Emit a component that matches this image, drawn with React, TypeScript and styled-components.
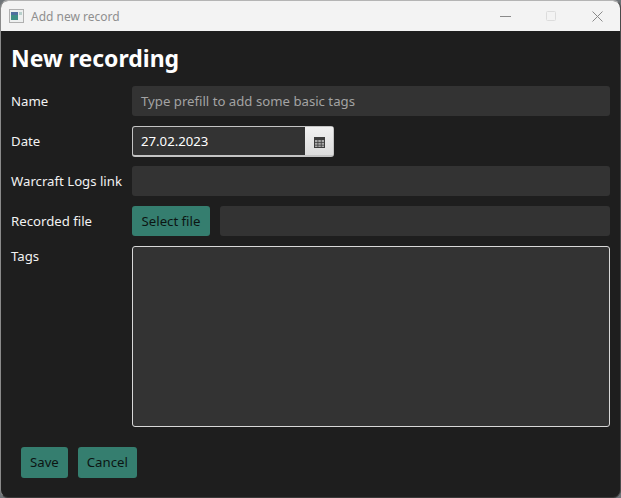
import styled, { createGlobalStyle } from 'styled-components';

const GlobalStyle = createGlobalStyle`
  html, body {
    margin: 0;
    padding: 0;
    background: #6f7478;
  }
  * {
    box-sizing: border-box;
  }
`;

const Window = styled.div`
  width: 621px;
  height: 498px;
  display: flex;
  flex-direction: column;
  overflow: hidden;
  border-radius: 8px 8px 8px 8px;
  border: 1px solid #b4b4b4;
  border-bottom-color: #3a3a3a;
  border-left-color: #8a8a8a;
  border-right-color: #4a4a4a;
  background: #1e1e1e;
  font-family: 'Noto Sans', 'Open Sans', sans-serif;
  font-size: 13.2px;
`;

const TitleBar = styled.div`
  height: 30px;
  flex: none;
  display: flex;
  align-items: center;
  padding-left: 8px;
  background: #f3f3f3;
  color: #8f8f8f;
  font-size: 12px;
`;

const TitleText = styled.span`
  margin-left: 7px;
  flex: 1;
`;

const WindowButton = styled.div`
  width: 46px;
  height: 30px;
  display: flex;
  align-items: center;
  justify-content: center;
`;

const Content = styled.div`
  flex: 1;
  display: flex;
  flex-direction: column;
  padding: 10px 10px 0;
`;

const Heading = styled.h1`
  margin: 0 0 10px;
  height: 35px;
  line-height: 35px;
  font-size: 23px;
  font-weight: 700;
  color: #ffffff;
`;

const Form = styled.div`
  display: grid;
  grid-template-columns: 121px 478px;
  grid-auto-rows: min-content;
  row-gap: 10px;
`;

const Label = styled.div<{ $top?: boolean }>`
  color: #f2f2f2;
  height: ${(p) => (p.$top ? '20px' : 'auto')};
  padding-top: ${(p) => (p.$top ? '1px' : '0')};
  display: flex;
  align-items: ${(p) => (p.$top ? 'flex-start' : 'center')};
  white-space: nowrap;
`;

const TextField = styled.div<{ $muted?: boolean }>`
  flex: 1;
  height: 30px;
  display: flex;
  align-items: center;
  padding: 0 9px;
  border-radius: 3px;
  background: #333333;
  color: ${(p) => (p.$muted ? '#a3a3a3' : '#ffffff')};
`;

const DatePicker = styled.div`
  width: 202px;
  height: 31px;
  margin-bottom: -1px;
  display: flex;
  border-radius: 3px;
  border: 1px solid #c4c4c4;
  border-bottom-width: 2px;
  background: #333333;
`;

const DateValue = styled.div`
  flex: 1;
  display: flex;
  align-items: center;
  padding-left: 8px;
  color: #ffffff;
`;

const CalendarButton = styled.div`
  width: 28px;
  display: flex;
  align-items: center;
  justify-content: center;
  padding-top: 2px;
  background: linear-gradient(#f0f0f0, #dcdcdc);
`;

const FileRow = styled.div`
  display: flex;
  gap: 10px;
`;

const Button = styled.div`
  height: 30px;
  display: flex;
  align-items: center;
  justify-content: center;
  padding: 0 9px;
  border-radius: 3px;
  background: #357e6f;
  color: #0c1513;
`;

const FileButton = styled(Button)`
  width: 78px;
  flex: none;
`;

const TagsArea = styled.div`
  height: 181px;
  border: 1px solid #d8d8d8;
  border-radius: 3px;
  background: #333333;
`;

const Actions = styled.div`
  display: flex;
  gap: 10px;
  margin-top: 20px;
  padding-left: 10px;
`;

const ActionButton = styled(Button)`
  height: 31px;
  padding-bottom: 2px;
`;

const AppIcon = () => (
  <svg width="15" height="14" viewBox="0 0 15 14">
    <rect x="0.5" y="0.5" width="14" height="13" fill="#eef0f0" stroke="#b0b0b0" />
    <rect x="2" y="3" width="7" height="8" fill="#3f8f86" />
    <rect x="2" y="3" width="7" height="3" fill="#4f6f9f" />
    <rect x="10" y="3" width="3" height="3" fill="#b8d0cc" />
  </svg>
);

const CalendarIcon = () => (
  <svg width="11" height="11" viewBox="0 0 11 11">
    <rect width="11" height="11" fill="#3c3c3c" />
    <path d="M1 3h2.5v2H1zM4.3 3h2.5v2H4.3zM7.6 3h2.4v2H7.6zM1 5.8h2.5v2H1zM4.3 5.8h2.5v2H4.3zM7.6 5.8h2.4v2H7.6zM1 8.5h2.5V10H1zM4.3 8.5h2.5V10H4.3zM7.6 8.5h2.4V10H7.6z" fill="#a8a8a8" />
  </svg>
);

export default function App() {
  return (
    <Window>
      <GlobalStyle />
      <TitleBar>
        <AppIcon />
        <TitleText>Add new record</TitleText>
        <WindowButton>
          <svg width="11" height="1"><rect width="11" height="1" fill="#8a8a8a" /></svg>
        </WindowButton>
        <WindowButton>
          <svg width="10" height="10"><rect x="0.5" y="0.5" width="9" height="9" rx="1" fill="none" stroke="#dcdcdc" /></svg>
        </WindowButton>
        <WindowButton>
          <svg width="11" height="11"><path d="M0.5 0.5l10 10M10.5 0.5l-10 10" stroke="#8a8a8a" fill="none" /></svg>
        </WindowButton>
      </TitleBar>
      <Content>
        <Heading>New recording</Heading>
        <Form>
          <Label>Name</Label>
          <TextField $muted>Type prefill to add some basic tags</TextField>
          <Label>Date</Label>
          <DatePicker>
            <DateValue>27.02.2023</DateValue>
            <CalendarButton><CalendarIcon /></CalendarButton>
          </DatePicker>
          <Label>Warcraft Logs link</Label>
          <TextField />
          <Label>Recorded file</Label>
          <FileRow>
            <FileButton>Select file</FileButton>
            <TextField />
          </FileRow>
          <Label $top>Tags</Label>
          <TagsArea />
        </Form>
        <Actions>
          <ActionButton>Save</ActionButton>
          <ActionButton>Cancel</ActionButton>
        </Actions>
      </Content>
    </Window>
  );
}
